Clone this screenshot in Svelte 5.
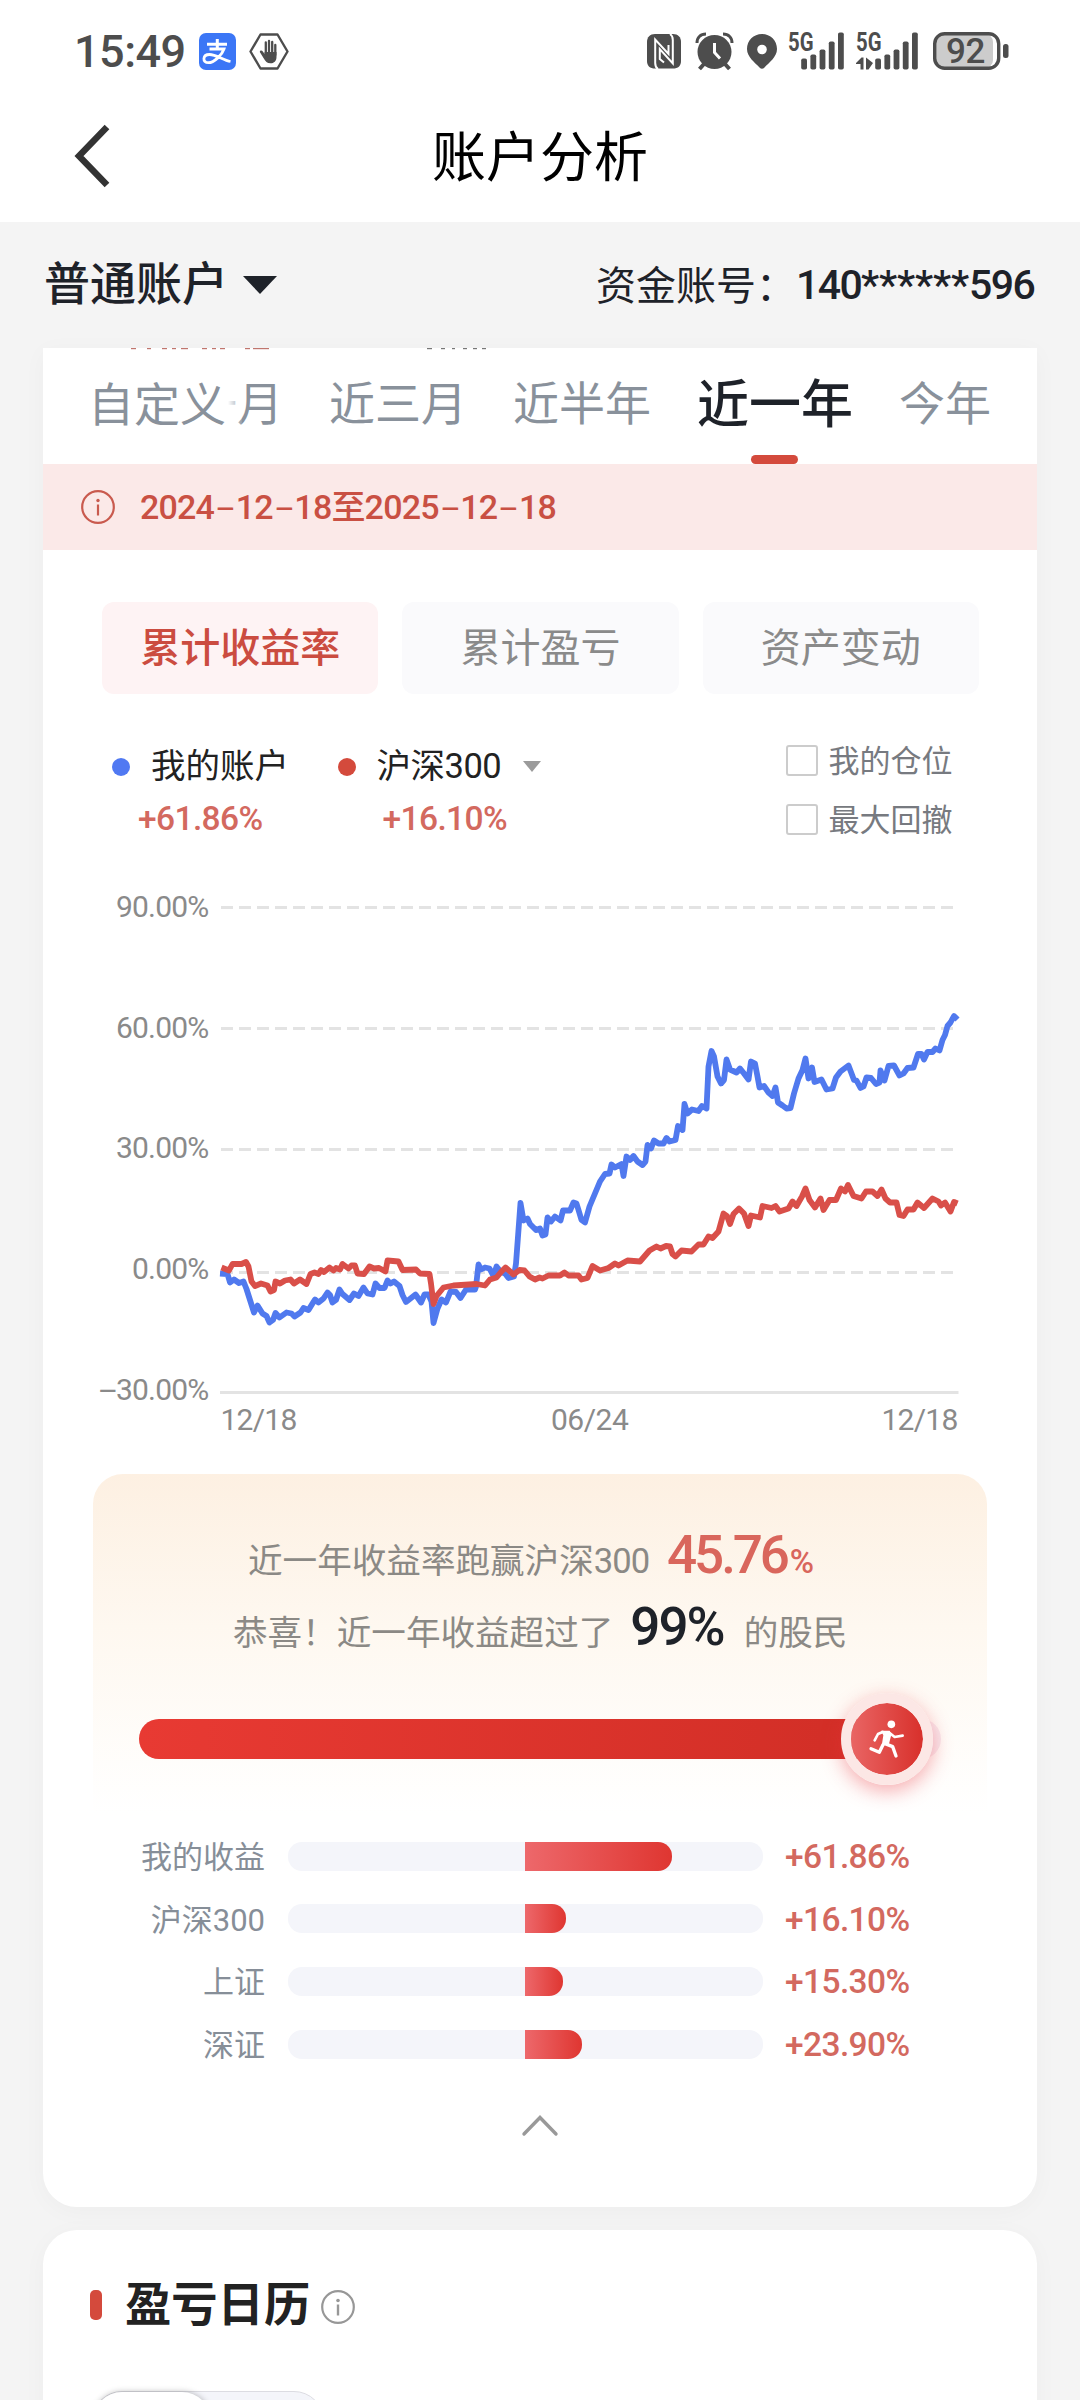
<script>
  const tabs = ['近一月', '近三月', '近半年', '近一年', '今年'];
  let activeTab = '近一年';

  const modes = ['累计收益率', '累计盈亏', '资产变动'];
  let activeMode = '累计收益率';

  const signals = [11, 15, 20, 28, 37];

  const compare = [
    { name: '我的收益', value: '+61.86%', width: 147 },
    { name: '沪深300', value: '+16.10%', width: 41 },
    { name: '上证', value: '+15.30%', width: 38 },
    { name: '深证', value: '+23.90%', width: 57 }
  ];

  const gridLines = [907.5, 1028.5, 1149.5, 1272.5];
  const yLabels = [
    { y: 916.5, text: '90.00%' },
    { y: 1037.5, text: '60.00%' },
    { y: 1157.5, text: '30.00%' },
    { y: 1279, text: '0.00%' }
  ];

  // what is left of the scrolled summary row above the sticky tabs
  const remnants = [
    [88, 5], [104, 4], [119, 5], [129, 4], [138, 7], [159, 5], [169, 4], [177, 5], [202, 5], [210, 16]
  ];
  const darkRemnants = [[384, 5], [398, 4], [409, 3], [420, 4], [430, 4], [439, 4]];

  const mine =
    '220,1273.5 227.5,1274 230,1282.5 234,1279.5 239,1283 243.5,1281.5 246.5,1289 254,1312.5 257.5,1305.5 262.5,1313.5 266.5,1316 269.5,1322.5 273,1320 275.5,1313 279.5,1317.5 286.5,1312.5 291.5,1313.5 294.5,1316.5 300.5,1312.5 303.5,1308 308.5,1310 312.5,1303.5 315,1299.5 318.5,1302.5 323.5,1298.5 327.5,1292.5 330,1295 332.5,1302.5 336,1300 339.5,1289.5 342.5,1294 349.5,1300 354,1293.5 358.5,1296 363.5,1287.5 367.5,1293.5 372.5,1294.5 375.5,1283.5 379.5,1288 384.5,1288 387.5,1280.5 390.5,1283.5 394,1281.5 399.5,1286 402.5,1295 406,1302 410.5,1298.5 415.5,1294.5 421,1302.5 424.5,1294.5 428.5,1294.5 431.5,1301.5 433.5,1323 437.5,1308.5 441.5,1299.5 446,1302.5 450.5,1291.5 456,1292 460.5,1298 466,1289.5 475,1289.5 476,1286.5 478.5,1264.5 481,1269.5 485,1267.5 489.5,1268.5 493.5,1276 496.5,1266.5 500.5,1271.5 505,1273.5 508.5,1278 514,1276.5 516,1263.5 520.5,1203 523.5,1220.5 527.5,1218.5 530,1224 536,1230 540,1228.5 542.5,1235.5 545.5,1234.5 547.5,1217.5 551,1221.5 555,1216.5 560.5,1220.5 563,1210.5 570,1210.5 573.5,1202.5 576.5,1203.5 578.5,1210 581.5,1220 585,1222.5 589.5,1206.5 600,1181.5 605,1174 609.5,1173.5 611.5,1164.5 615,1167.5 621.5,1164 623.5,1176 626.5,1156.5 630,1160 633.5,1156 637.5,1161.5 642.5,1165 645.5,1161.5 647.5,1145 651,1148.5 654,1140.5 658.5,1143.5 663.5,1143.5 666.5,1138 669.5,1141.5 675.5,1140 678,1126 682.5,1130 684.5,1104 687.5,1113.5 692,1109.5 698.5,1111 702,1106 706.5,1108.5 708.5,1066.5 711.5,1051 714,1056.5 717.5,1076.5 721,1083.5 724,1080 726.5,1059.5 730,1069.5 736.5,1072.5 740,1068.5 744,1073.5 748.5,1079.5 751,1061.5 755,1063.5 757.5,1076.5 759.5,1087.5 764,1086 768.5,1092.5 772.5,1096 775.5,1087.5 778,1102.5 782.5,1105.5 786.5,1108.5 790.5,1108 794,1093.5 798.5,1078.5 802.5,1070 805.5,1058.5 808.5,1078.5 812,1067.5 814.5,1082 821.5,1079.5 826.5,1089.5 832.5,1088.5 836,1077.5 840.5,1071.5 848.5,1065.5 854,1080 856.5,1080.5 860.5,1088 863.5,1086.5 866.5,1077.5 871,1078 876,1084 879.5,1082.5 880.5,1070.5 884.5,1080.5 888.5,1066 894,1065.5 899.5,1075.5 903.5,1073.5 907.5,1068 913.5,1067.5 918,1054 921.5,1054 924,1059.5 927.5,1052 932.5,1052 935.5,1048.5 939.5,1050.5 942.5,1040 945,1035 947.5,1026 950.5,1022.5 954,1016 957.5,1019.5';

  const index =
    '221.5,1267.5 229,1270.5 232.5,1264 241.5,1264 246,1262 248.5,1266.5 251.5,1281.5 255,1286 261,1283.5 267.5,1285.5 270.5,1291.5 274,1290 275.5,1281.5 280,1283.5 285,1280.5 290.5,1279.5 294,1283.5 300,1279.5 306.5,1284 310.5,1274 314.5,1272.5 318.5,1274 321,1270 324,1272 329.5,1267.5 333.5,1270.5 336,1268 340,1269.5 342.5,1264 348.5,1268.5 351.5,1265.5 355,1265.5 357.5,1273.5 364,1274 369.5,1266.5 374,1268.5 379,1268 385.5,1271.5 387.5,1260.5 398.5,1261.5 402.5,1270 416,1269.5 420,1273.5 429.5,1274 431,1283.5 433.5,1304 436.5,1296 443.5,1287.5 453.5,1285.5 476.5,1284 485,1285.5 490,1279.5 496.5,1277.5 501.5,1271.5 505.5,1267.5 513.5,1274.5 519.5,1270 524.5,1270.5 529.5,1276.5 535,1279.5 539.5,1277.5 542.5,1278.5 548.5,1275.5 560,1275.5 564.5,1272.5 568.5,1275.5 578.5,1275.5 581.5,1279.5 587.5,1278 592.5,1266 600,1270.5 608.5,1268 615,1263.5 618.5,1265.5 627.5,1260.5 640,1261.5 649.5,1250.5 656.5,1246.5 660.5,1248.5 666,1246 670,1246.5 672.5,1254 675.5,1256.5 681.5,1250.5 691.5,1251.5 698.5,1244.5 703.5,1244.5 708.5,1236.5 712.5,1238 718.5,1231.5 723.5,1213.5 727,1216 730,1224 733.5,1214 739,1208.5 744,1213.5 748.5,1226 751,1215.5 760,1217.5 762.5,1206 771.5,1208 775.5,1206 779.5,1211.5 788.5,1208.5 792.5,1201.5 796.5,1206 802,1196.5 805.5,1188.5 809.5,1200 815,1207.5 820.5,1198.5 823.5,1210 829.5,1200 836,1200 841,1188.5 845,1191.5 848,1185 853.5,1196 861.5,1198.5 866,1191.5 872.5,1191.5 877.5,1196 881.5,1189.5 885.5,1198.5 890,1202.5 896.5,1202.5 899.5,1215 903.5,1216 907.5,1209.5 913.5,1209.5 917.5,1202.5 924,1208 932.5,1198.5 938.5,1201.5 941,1205.5 945,1202.5 950.5,1211.5 954,1202 957.5,1203.5';
</script>

<div class="page">
  <div class="status">
    <span class="clock">15:49</span>
    <svg class="alipay" viewBox="0 0 37 37">
      <rect width="37" height="37" rx="7" fill="#3b76f6" />
      <g fill="none" stroke="#fff">
        <path d="M8 11.3H28M18.3 6V16" stroke-width="3" />
        <path d="M10.5 16H25C23 22 15 29.7 9.5 29.7C3 29.7 3.500 21.500 10.500 21.500C17 21.500 24 27 31.500 28.500" stroke-width="2.800" />
      </g>
    </svg>
    <svg class="hex" viewBox="0 0 40 37">
      <path d="M11.500 1.500H28.500L38.500 18.500L28.500 35.500H11.500L1.500 18.500Z" fill="none" stroke="#4d4d4d" stroke-width="2.400" stroke-linejoin="round" />
      <path d="M16.800 9.500V22M20 8V22M23.200 9V22M26.300 12V22" stroke="#4d4d4d" stroke-width="2.300" stroke-linecap="round" />
      <path d="M15.600 19H27.500V24C27.500 28 25 30.300 21.500 30.300C18 30.300 16.500 28.500 14.500 25L10.800 19C11 17.200 13 17.200 14 18.800L15.600 21Z" fill="#4d4d4d" />
    </svg>
    <div class="right">
      <svg class="nfc" viewBox="0 0 34 35">
        <path d="M8 0H26C31 0 34 3 34 8V27C34 32 31 34.500 26 34.500H8C3 34.500 0 32 0 27V8C0 3 3 0 8 0Z" fill="#4d4d4d" />
        <path d="M11 35C8.500 33.500 8.200 32 8.200 29V5.500L21.500 20V11M23 0C25.500 1.500 25.800 3 25.800 6V29.500L12.800 15V25L17 28.500" fill="none" stroke="#fff" stroke-width="2" />
      </svg>
      <svg class="alarm" viewBox="0 0 37 37">
        <circle cx="18.500" cy="19" r="17" fill="#4d4d4d" />
        <path d="M1 10C1 4.500 4.500 1 10 1M36 10C36 4.500 32.500 1 27 1" fill="none" stroke="#4d4d4d" stroke-width="3" />
        <path d="M3.500 36L8 31M33.500 36L29 31" stroke="#4d4d4d" stroke-width="4" />
        <path d="M18.500 10V19.500L24 25.500" fill="none" stroke="#fff" stroke-width="3" />
      </svg>
      <svg class="pin" viewBox="0 0 30 35">
        <path d="M15 0C23.500 0 30 6.500 30 15C30 23 22 28.500 17.500 33.500Q15 36 12.500 33.500C8 28.500 0 23 0 15C0 6.500 6.500 0 15 0Z" fill="#4d4d4d" />
        <circle cx="15" cy="15.500" r="4.800" fill="#fff" />
      </svg>
      {#each [false, true] as data}
        <svg class="signal" class:data viewBox="0 0 {data ? 63 : 57} 38">
          <text x="0" y="18.500" class="net" textLength="25.500" lengthAdjust="spacingAndGlyphs">5G</text>
          {#each signals as h, i}
            <rect x={(data ? 19.200 : 13.200) + i * 9.200} y={37.500 - h} width="5.800" height={h} rx="1.800" fill="#4d4d4d" />
          {/each}
          {#if data}
            <path d="M0 31L5.500 25.500H7.500V37.500H4.500V32H0ZM10 25.500L17 31L12.500 37.500H10Z" fill="#4d4d4d" />
          {/if}
        </svg>
      {/each}
      <svg class="battery" viewBox="0 0 76 38">
        <rect x="2" y="2" width="58" height="34" rx="8" fill="#ccc" />
        <rect x="1.700" y="1.700" width="64" height="34.600" rx="10" fill="none" stroke="#4d4d4d" stroke-width="3.400" />
        <rect x="70" y="12" width="5.500" height="14" rx="2.500" fill="#4d4d4d" />
        <text x="32.500" y="31" text-anchor="middle" class="pct">92</text>
      </svg>
    </div>
  </div>

  <header class="nav">
    <svg class="back" viewBox="0 0 36 64">
      <path d="M33 3L5 32L33 61" fill="none" stroke="#333" stroke-width="6.500" />
    </svg>
    <h1>账户分析</h1>
  </header>

  <div class="account">
    <span class="type">普通账户</span>
    <svg class="caret" viewBox="0 0 34 18"><path d="M0 0H34L17 18Z" fill="#1e2229" /></svg>
    <span class="label">资金账号：</span>
    <span class="no">140<i>******</i>596</span>
  </div>

  <section class="card main">
    <svg class="remnant" viewBox="0 0 994 2">
      {#each remnants as [x, w]}
        <rect {x} y="0" width={w} height="1.200" fill="#c0766e" />
      {/each}
      {#each darkRemnants as [x, w]}
        <rect {x} y="0" width={w} height="1.200" fill="#777" />
      {/each}
    </svg>
    <div class="tabs">
      <div class="custom">自定义</div>
      {#each tabs as tab}
        <button class="tab" class:active={tab === activeTab} on:click={() => (activeTab = tab)}>{tab}</button>
      {/each}
    </div>

    <div class="range">
      <svg class="info" viewBox="0 0 34 34">
        <circle cx="17" cy="17" r="15.800" fill="none" stroke="#c95a4e" stroke-width="2.200" />
        <path d="M17 14.500V25.500" stroke="#c95a4e" stroke-width="2.200" />
        <circle cx="17" cy="10.500" r="1.700" fill="#c95a4e" />
      </svg>
      <span class="dates">2024<b>-</b>12<b>-</b>18至2025<b>-</b>12<b>-</b>18</span>
    </div>

    <div class="modes">
      {#each modes as mode}
        <button class="mode" class:active={mode === activeMode} on:click={() => (activeMode = mode)}>{mode}</button>
      {/each}
    </div>

    <div class="legend">
      <div class="item first">
        <div class="name"><span class="dot blue"></span>我的账户</div>
        <div class="value">+61.86%</div>
      </div>
      <div class="item second">
        <div class="name">
          <span class="dot red"></span><span class="benchmark">沪深300</span>
          <svg class="drop" viewBox="0 0 18 11"><path d="M0 0H18L9 11Z" fill="#9b9b9b" /></svg>
        </div>
        <div class="value">+16.10%</div>
      </div>
      <div class="checks">
        <div class="check"><span class="box"></span>我的仓位</div>
        <div class="check"><span class="box"></span>最大回撤</div>
      </div>
    </div>

    <svg class="chart" viewBox="93 880 894 570">
      {#each gridLines as y}
        <line x1="221" x2="954" y1={y} y2={y} stroke="#e3e3e3" stroke-width="3" stroke-dasharray="12 6" />
      {/each}
      <line x1="220" x2="958.500" y1="1392.500" y2="1392.500" stroke="#e3e3e3" stroke-width="3" />
      {#each yLabels as label}
        <text x="208.500" y={label.y} text-anchor="end" class="axis">{label.text}</text>
      {/each}
      <text x="208.500" y="1400" text-anchor="end" class="axis">30.00%</text>
      <text x="99" y="1400" class="axis" textLength="16" lengthAdjust="spacingAndGlyphs">-</text>
      <text x="220.500" y="1430" class="axis" textLength="76">12/18</text>
      <text x="551" y="1430" class="axis" textLength="77">06/24</text>
      <text x="881.500" y="1430" class="axis" textLength="76">12/18</text>
      <polyline points={mine} fill="none" stroke="#5079ee" stroke-width="5.800" stroke-linejoin="round" />
      <polyline points={index} fill="none" stroke="#d94f49" stroke-width="5.800" stroke-linejoin="round" />
    </svg>

    <div class="result">
      <p class="beat">近一年收益率跑赢沪深<span class="num">300</span><strong>45.76</strong><em>%</em></p>
      <p class="rank">恭喜！近一年收益超过了<strong>99%</strong>的股民</p>
      <div class="progress">
        <div class="fill"></div>
        <div class="knob">
          <svg viewBox="213 129 216 216">
            <circle cx="334" cy="193" r="11.500" fill="#fff" />
            <path d="M303 212H329L334 224L327 251L305 258L310 226Z" fill="#fff" />
            <g fill="none" stroke="#fff" stroke-width="10" stroke-linecap="round" stroke-linejoin="round">
              <path d="M308 216L294 222L284 241M328 218L344 231L368 227" stroke-width="8" />
              <path d="M313 250L338 260L348 288M309 254L298 277L273 266" />
            </g>
          </svg>
        </div>
      </div>
    </div>

    <div class="compare">
      {#each compare as row}
        <div class="row">
          <span class="rname">{row.name}</span>
          <div class="track"><div class="bar" style="width: {row.width}px"></div></div>
          <span class="value">{row.value}</span>
        </div>
      {/each}
    </div>

    <svg class="fold" viewBox="0 0 36 22"><path d="M2 20L18 3.500L34 20" fill="none" stroke="#999" stroke-width="3.400" stroke-linecap="round" /></svg>
  </section>

  <section class="card calendar">
    <div class="heading">
      <span class="mark"></span>
      <h2>盈亏日历</h2>
      <svg class="info" viewBox="0 0 34 34">
        <circle cx="17" cy="17" r="15.800" fill="none" stroke="#979797" stroke-width="2.200" />
        <path d="M17 14.500V25.500" stroke="#979797" stroke-width="2.400" />
        <circle cx="17" cy="10.500" r="1.800" fill="#979797" />
      </svg>
    </div>
    <div class="switch"><div class="thumb"></div></div>
  </section>
</div>

<style>
  :global(body) {
    background: #f4f4f4;
  }

  .page {
    width: 1080px;
    height: 2400px;
    overflow: hidden;
    font-family: Roboto, "Noto Sans CJK SC", sans-serif;
    color: #1e2229;
  }

  svg {
    display: block;
    flex: none;
    overflow: visible;
  }

  h1, h2, p {
    margin: 0;
  }

  button {
    border: none;
    padding: 0;
    background: none;
    font-family: inherit;
  }

  .status {
    display: flex;
    align-items: flex-start;
    height: 102px;
    box-sizing: border-box;
    padding: 32px 71px 0 74px;
    background: #fff;
    color: #4d4d4d;
  }

  .clock {
    width: 125px;
    font-size: 45px;
    line-height: 40px;
    font-weight: 500;
    letter-spacing: -0.5px;
  }

  .alipay {
    width: 37px;
    height: 37px;
    margin-top: 1px;
  }

  .hex {
    width: 40px;
    height: 37px;
    margin: 1px 0 0 12.5px;
  }

  .right {
    display: flex;
    margin-left: auto;
  }

  .nfc {
    width: 34px;
    height: 35px;
    margin: 2px 15px 0 0;
  }

  .alarm {
    width: 37px;
    height: 37px;
    margin: 1px 14px 0 0;
  }

  .pin {
    width: 30px;
    height: 35px;
    margin: 2px 11px 0 0;
  }

  .signal {
    width: 57px;
    height: 38px;
    margin-right: 11px;
  }

  .signal.data {
    width: 63px;
    margin-right: 14px;
  }

  .battery {
    width: 76px;
    height: 38px;
  }

  .net {
    font-size: 26px;
    font-weight: 700;
    fill: #4d4d4d;
  }

  .pct {
    font-size: 35px;
    font-weight: 500;
    fill: #4d4d4d;
    letter-spacing: -0.5px;
  }

  .nav {
    display: flex;
    align-items: center;
    height: 120px;
    padding: 0 74px;
    background: #fff;
  }

  .back {
    width: 36px;
    height: 64px;
    margin-top: -12px;
  }

  h1 {
    flex: 1;
    margin: -7px 36px 0 0;
    text-align: center;
    font-size: 54px;
    line-height: 70px;
    font-weight: 400;
    color: #000;
  }

  .account {
    display: flex;
    align-items: center;
    height: 126px;
    box-sizing: border-box;
    padding: 0 43px 0 44px;
  }

  .type {
    margin-top: -3px;
    font-size: 46px;
    line-height: 60px;
    font-weight: 500;
  }

  .caret {
    width: 34px;
    height: 18px;
    margin-left: 15px;
  }

  .label {
    margin: -5px 0 0 auto;
    font-size: 40px;
  }

  .no {
    width: 241px;
    margin-top: -1px;
    font-size: 41px;
    font-weight: 500;
    letter-spacing: -1.6px;
  }

  .no i {
    font-style: normal;
    letter-spacing: -0.2px;
  }

  .card {
    width: 994px;
    margin: 0 43px;
    background: #fff;
    box-shadow: 0 4px 24px rgba(0, 0, 0, 0.03);
  }

  .main {
    position: relative;
    height: 1859px;
    border-radius: 0 0 34px 34px;
  }

  .remnant {
    position: absolute;
    top: 0;
    left: 0;
    z-index: 1;
    width: 994px;
    height: 2px;
  }

  .tabs {
    position: relative;
    display: flex;
    gap: 46px;
    height: 116px;
    padding-left: 102px;
  }

  .custom {
    position: absolute;
    left: 45px;
    width: 154px;
    height: 116px;
    font-size: 46px;
    line-height: 115px;
    color: #89919b;
    background: linear-gradient(to right, #fff 140px, rgba(255, 255, 255, 0.1));
  }

  .tab {
    height: 116px;
    padding-bottom: 3px;
    font-size: 46px;
    line-height: 113px;
    color: #89919b;
    white-space: nowrap;
  }

  .tab.active {
    position: relative;
    padding-bottom: 0;
    font-size: 52px;
    line-height: 116px;
    font-weight: 500;
    color: #1e2229;
  }

  .tab.active::after {
    content: "";
    position: absolute;
    left: 54px;
    bottom: 0;
    width: 47px;
    height: 9px;
    border-radius: 5px;
    background: #d44a3c;
  }

  .range {
    display: flex;
    align-items: center;
    height: 86px;
    padding-left: 38px;
    background: #fbe9e8;
    color: #c95043;
  }

  .info {
    width: 34px;
    height: 34px;
  }

  .dates {
    margin: -6px 0 0 25px;
    font-size: 34px;
    font-weight: 500;
    letter-spacing: -0.8px;
  }

  .dates b {
    display: inline-block;
    width: 21.6px;
    text-align: center;
    font-weight: 400;
    transform: scaleX(1.9);
  }

  .modes {
    display: flex;
    gap: 24px;
    padding: 52px 58px 0 59px;
  }

  .mode {
    flex: 1;
    height: 92px;
    padding-bottom: 7px;
    border-radius: 12px;
    background: #fafafc;
    font-size: 40px;
    color: #8a8a8a;
  }

  .mode.active {
    background: #fef3f4;
    color: #cb4c40;
    font-weight: 500;
  }

  .legend {
    display: flex;
    height: 186px;
    box-sizing: border-box;
    padding: 46px 0 0 69px;
  }

  .item.first {
    width: 225.5px;
  }

  .item.second {
    width: 449px;
  }

  .name {
    display: flex;
    align-items: center;
    height: 46px;
    font-size: 34.5px;
    color: #222;
  }

  .benchmark {
    letter-spacing: -0.5px;
  }

  .dot {
    width: 18px;
    height: 18px;
    margin: 7px 21px 0 0;
    border-radius: 50%;
  }

  .blue {
    background: #5079f2;
  }

  .red {
    background: #d44a3c;
  }

  .drop {
    width: 18px;
    height: 11px;
    margin: 7px 0 0 22px;
  }

  .value {
    font-size: 33.5px;
    line-height: 46px;
    font-weight: 500;
    letter-spacing: -0.6px;
    color: #d3695f;
  }

  .item .value {
    margin-top: 10px;
    padding-left: 26px;
  }

  .item.second .value {
    padding-left: 45px;
  }

  .checks {
    display: flex;
    flex-direction: column;
    gap: 13px;
    margin-top: -5px;
  }

  .check {
    display: flex;
    align-items: center;
    height: 46px;
    font-size: 31px;
    color: #777a80;
  }

  .box {
    width: 28px;
    height: 27px;
    margin: 5px 11px 0 -1px;
    border: 2px solid #ccc;
    border-radius: 3px;
  }

  .chart {
    width: 894px;
    height: 570px;
    margin-left: 50px;
  }

  .axis {
    font-size: 30px;
    fill: #8a8a8a;
    letter-spacing: -0.8px;
  }

  .result {
    width: 894px;
    height: 340px;
    margin: 24px auto 0;
    border-radius: 30px 30px 0 0;
    background: linear-gradient(#fdf0e2, #fef8f0 45%, #fff);
    color: #8b8985;
    font-size: 34.6px;
  }

  .result p {
    display: flex;
    align-items: baseline;
    height: 72px;
    line-height: 72px;
    white-space: nowrap;
  }

  .beat {
    padding: 45px 0 0 155px;
  }

  .num {
    letter-spacing: -1px;
  }

  .result strong {
    font-size: 53px;
    font-weight: 500;
  }

  .beat strong {
    margin-left: 18px;
    letter-spacing: -3.1px;
    color: #d9665c;
  }

  .beat em {
    margin-left: 3px;
    font-size: 33px;
    font-style: normal;
    font-weight: 500;
    letter-spacing: -1px;
    color: #d9665c;
  }

  .rank {
    padding-left: 140px;
  }

  .rank strong {
    margin: 0 20px 0 17px;
    letter-spacing: -2px;
    color: #1e2229;
  }

  .progress {
    position: relative;
    width: 802px;
    height: 40px;
    margin: 56px 0 0 46px;
    border-radius: 20px;
    background: #f8e9ee;
  }

  .fill {
    width: 748px;
    height: 40px;
    border-radius: 20px 0 0 20px;
    background: linear-gradient(to right, #e83a33, #d12e26);
  }

  .knob {
    position: absolute;
    top: -26px;
    left: 702px;
    width: 72px;
    height: 72px;
    border: 10px solid #fce7e5;
    border-radius: 50%;
    background: linear-gradient(to right, #e96564, #d8302b) padding-box;
    box-shadow: 0 6px 20px rgba(232, 50, 60, 0.4);
  }

  .compare {
    display: flex;
    flex-direction: column;
    gap: 16.7px;
    padding: 19px 0 0 48px;
  }

  .row {
    display: flex;
    align-items: center;
    height: 46px;
  }

  .row .value {
    margin-top: 2px;
  }

  .rname {
    width: 174px;
    margin-top: -3px;
    text-align: right;
    font-size: 31px;
    color: #868e98;
  }

  .track {
    width: 475px;
    height: 29px;
    margin: 0 22px 0 23px;
    border-radius: 14px;
    background: #f4f5fa;
  }

  .bar {
    height: 29px;
    margin-left: 237px;
    border-radius: 0 14px 14px 0;
    background: linear-gradient(to right, #ed686b, #df3631);
  }

  .fold {
    width: 36px;
    height: 22px;
    margin: 47px auto 0;
  }

  .calendar {
    height: 200px;
    margin-top: 23px;
    border-radius: 34px 34px 0 0;
  }

  .heading {
    display: flex;
    align-items: center;
    height: 150px;
    padding-left: 47px;
  }

  .mark {
    width: 12px;
    height: 30px;
    margin-right: 23px;
    border-radius: 5px;
    background: #d44a3c;
  }

  h2 {
    margin-top: -1px;
    font-size: 46.3px;
    line-height: 60px;
    font-weight: 700;
    color: #222;
  }

  .heading .info {
    margin: 4px 0 0 11px;
  }

  .switch {
    width: 232px;
    height: 60px;
    margin: 11px 0 0 49px;
    box-sizing: border-box;
    border: 1px solid #dcdce2;
    border-radius: 30px;
    background: #f4f5fa;
  }

  .thumb {
    width: 118px;
    height: 58px;
    border-radius: 30px;
    background: #fff;
    box-shadow: 0 0 6px rgba(0, 0, 0, 0.28);
  }
</style>
